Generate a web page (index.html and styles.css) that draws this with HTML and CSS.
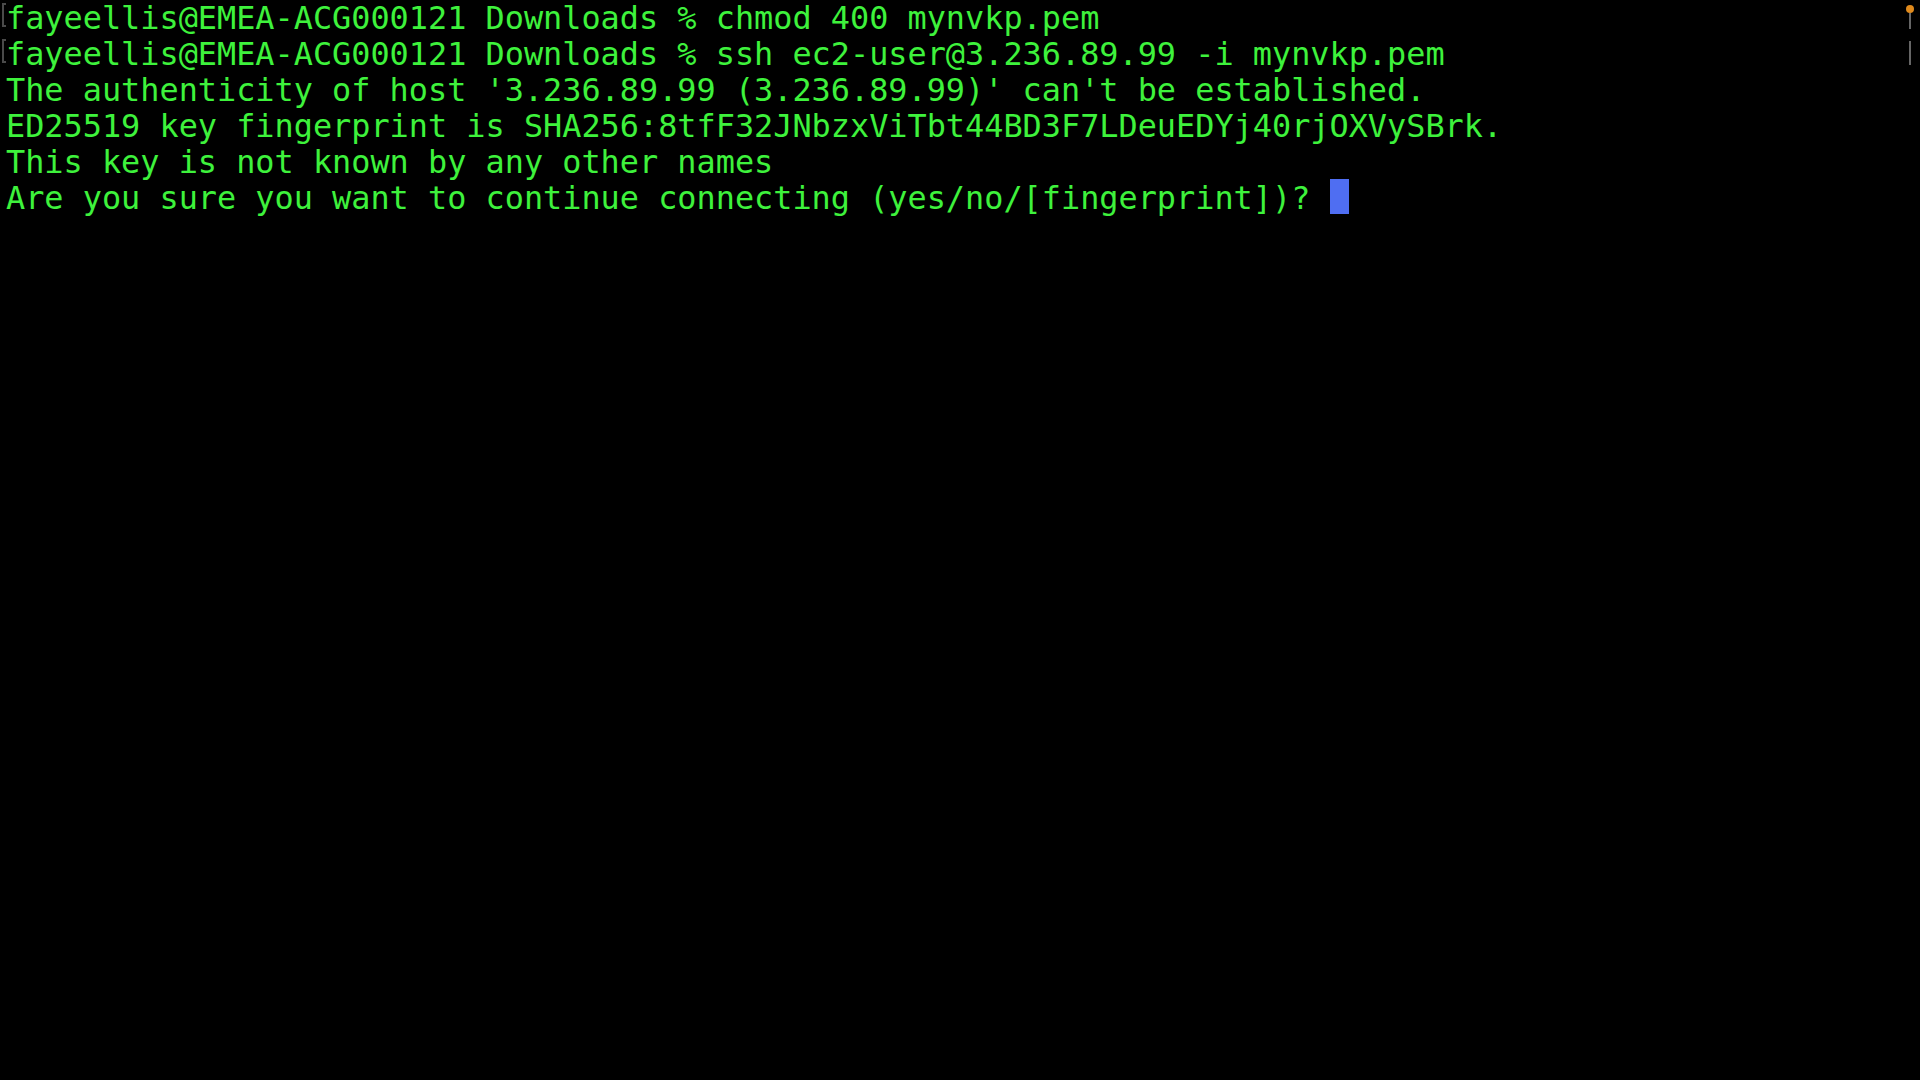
FILE: index.html
```html
<!DOCTYPE html>
<html>
<head>
<meta charset="utf-8">
<link rel="stylesheet" href="styles.css">
</head>
<body>
<div class="terminal">
  <div class="line marked">fayeellis@EMEA-ACG000121 Downloads % chmod 400 mynvkp.pem</div>
  <div class="line marked">fayeellis@EMEA-ACG000121 Downloads % ssh ec2-user@3.236.89.99 -i mynvkp.pem</div>
  <div class="line">The authenticity of host '3.236.89.99 (3.236.89.99)' can't be established.</div>
  <div class="line">ED25519 key fingerprint is SHA256:8tfF32JNbzxViTbt44BD3F7LDeuEDYj40rjOXVySBrk.</div>
  <div class="line">This key is not known by any other names</div>
  <div class="line">Are you sure you want to continue connecting (yes/no/[fingerprint])? <span class="cursor"></span></div>
</div>
<div class="scroll">
  <span class="dot"></span>
  <span class="bar one"></span>
  <span class="bar two"></span>
</div>
</body>
</html>
```
FILE: styles.css
```css
html, body {
  margin: 0;
  padding: 0;
  background: #000;
  width: 1920px;
  height: 1080px;
  overflow: hidden;
}
.terminal {
  padding: 0 0 0 6px;
  font-family: "DejaVu Sans Mono", monospace;
  font-size: 31.87px;
  line-height: 36px;
  color: #3ef23c;
}
.line {
  position: relative;
  height: 36px;
  white-space: pre;
}
.marked::before {
  content: "";
  position: absolute;
  left: -4px;
  top: 3px;
  width: 4px;
  height: 24px;
  border: 2px solid #4a4a4a;
  border-right: none;
  box-sizing: border-box;
}
.cursor {
  display: inline-block;
  width: 19px;
  height: 35px;
  background: #4f6ef2;
  vertical-align: top;
  margin-top: -1px;
}
.scroll {
  position: absolute;
  top: 0;
  right: 0;
  width: 20px;
  height: 80px;
}
.dot {
  position: absolute;
  left: 6px;
  top: 5px;
  width: 8px;
  height: 8px;
  border-radius: 50%;
  background: #e08a1c;
}
.bar {
  position: absolute;
  left: 9px;
  width: 2px;
  background: #666;
}
.bar.one { top: 13px; height: 16px; }
.bar.two { top: 41px; height: 24px; }
```
